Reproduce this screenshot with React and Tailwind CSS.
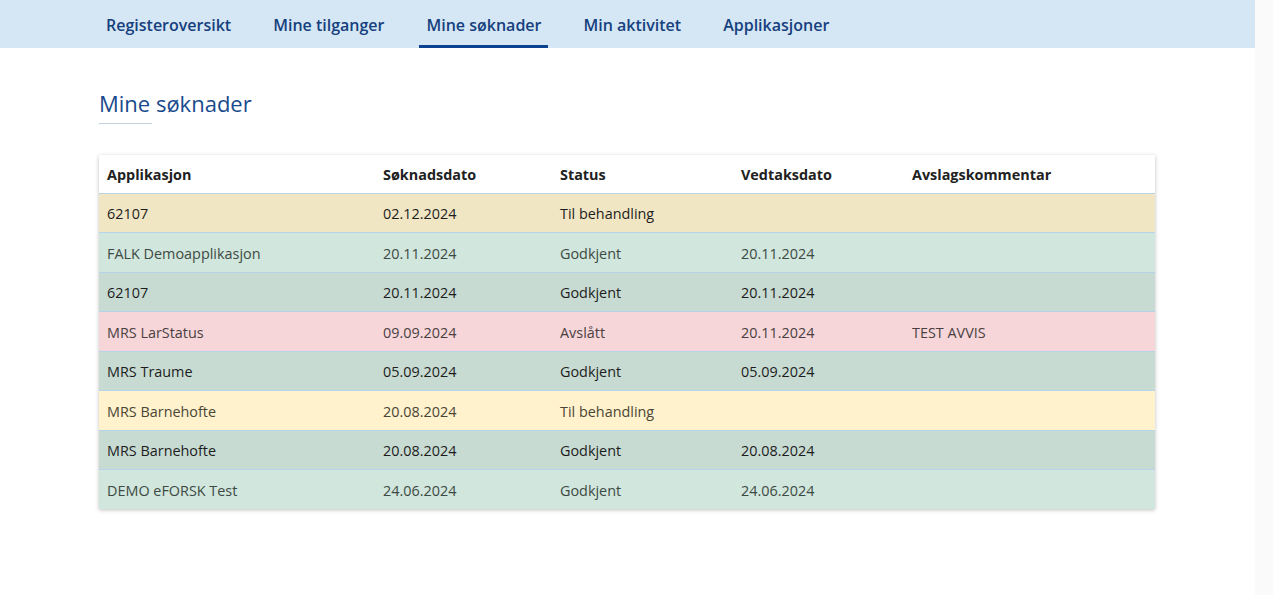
import React from 'react'

const navItems = ['Registeroversikt', 'Mine tilganger', 'Mine søknader', 'Min aktivitet', 'Applikasjoner']

const rows = [
  { app: '62107', date: '02.12.2024', status: 'Til behandling', decided: '', comment: '', bg: 'bg-[#f1e6c4]', text: 'text-[#1d1d1d]' },
  { app: 'FALK Demoapplikasjon', date: '20.11.2024', status: 'Godkjent', decided: '20.11.2024', comment: '', bg: 'bg-[#d1e6dc]', text: 'text-[#3d4a44]' },
  { app: '62107', date: '20.11.2024', status: 'Godkjent', decided: '20.11.2024', comment: '', bg: 'bg-[#c7dbd2]', text: 'text-[#1d1d1d]' },
  { app: 'MRS LarStatus', date: '09.09.2024', status: 'Avslått', decided: '20.11.2024', comment: 'TEST AVVIS', bg: 'bg-[#f7d6d9]', text: 'text-[#4a3f41]' },
  { app: 'MRS Traume', date: '05.09.2024', status: 'Godkjent', decided: '05.09.2024', comment: '', bg: 'bg-[#c7dbd2]', text: 'text-[#1d1d1d]' },
  { app: 'MRS Barnehofte', date: '20.08.2024', status: 'Til behandling', decided: '', comment: '', bg: 'bg-[#fff2cc]', text: 'text-[#4a4636]' },
  { app: 'MRS Barnehofte', date: '20.08.2024', status: 'Godkjent', decided: '20.08.2024', comment: '', bg: 'bg-[#c7dbd2]', text: 'text-[#1d1d1d]' },
  { app: 'DEMO eFORSK Test', date: '24.06.2024', status: 'Godkjent', decided: '24.06.2024', comment: '', bg: 'bg-[#d1e6dc]', text: 'text-[#3d4a44]' },
]

export default function App() {
  return (
    <div className="flex min-h-[595px] bg-white font-['Open_Sans',sans-serif]">
      <div className="flex-1">
        {/* Top navigation */}
        <nav className="flex h-[48px] gap-[28px] bg-[#d5e7f4] pl-[99px]">
          {navItems.map((item) => (
            <a
              key={item}
              href="#"
              className={`flex items-center border-b-[3px] px-[7px] pt-[4px] text-[16px] font-semibold text-[#15407e] ${
                item === 'Mine søknader' ? 'border-[#0d4291]' : 'border-transparent'
              }`}
            >
              {item}
            </a>
          ))}
        </nav>

        <main className="px-[99px] pt-[41px]">
          <h1 className="text-[22px] leading-[28px] text-[#184a8c]">Mine søknader</h1>
          <div className="mt-[6px] h-[1px] w-[53px] bg-[#c3d0e0]"></div>

          <div className="mt-[31px] w-[1056px] bg-white shadow-[0_1px_4px_rgba(0,0,0,0.25)]">
            <table className="w-full table-fixed border-collapse text-left text-[14.4px]">
              <colgroup>
                <col className="w-[276px]" />
                <col className="w-[177px]" />
                <col className="w-[181px]" />
                <col className="w-[171px]" />
                <col />
              </colgroup>
              <thead>
                <tr className="h-[38px] border-b border-[#b9d3e6] text-[#212121]">
                  <th className="px-[8px] pt-[3px] font-bold">Applikasjon</th>
                  <th className="px-[8px] pt-[3px] font-bold">Søknadsdato</th>
                  <th className="px-[8px] pt-[3px] font-bold">Status</th>
                  <th className="px-[8px] pt-[3px] font-bold">Vedtaksdato</th>
                  <th className="px-[8px] pt-[3px] font-bold">Avslagskommentar</th>
                </tr>
              </thead>
              <tbody>
                {rows.map((r, i) => (
                  <tr key={i} className={`h-[39.5px] border-b border-[#b5d3ea] last:border-b-0 ${r.bg} ${r.text}`}>
                    <td className="px-[8px] pt-[3px]">{r.app}</td>
                    <td className="px-[8px] pt-[3px]">{r.date}</td>
                    <td className="px-[8px] pt-[3px]">{r.status}</td>
                    <td className="px-[8px] pt-[3px]">{r.decided}</td>
                    <td className="px-[8px] pt-[3px]">{r.comment}</td>
                  </tr>
                ))}
              </tbody>
            </table>
          </div>
        </main>
      </div>
      {/* scrollbar gutter */}
      <div className="w-[18px] bg-[#fafafa]"></div>
    </div>
  )
}
